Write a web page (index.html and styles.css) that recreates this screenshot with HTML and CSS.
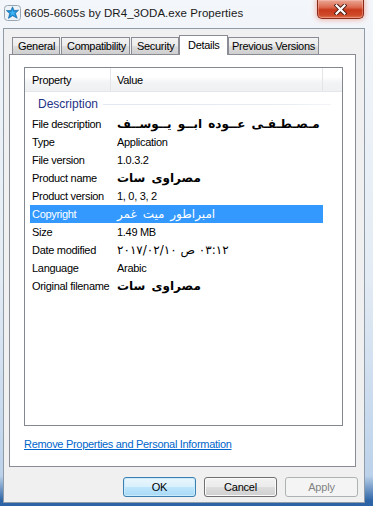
FILE: index.html
```html
<!DOCTYPE html>
<html>
<head>
<meta charset="utf-8">
<link rel="stylesheet" href="styles.css">
</head>
<body>
<div class="window">
  <div class="titlebar">
    <svg class="icon" width="17" height="16" viewBox="0 0 17 16">
      <rect x="0.5" y="0.5" width="16" height="15" rx="3" fill="#eef3f7" stroke="#9aa6b2"/>
      <polygon points="8.5,1.8 10.2,5.6 14.6,5.2 11.4,8.3 13.2,13.2 8.6,10.7 4.4,13.4 5.6,8.6 2.4,5.6 6.9,5.6" fill="#1c8fd6" stroke="#0d5e9e" stroke-width="0.6"/>
      <polygon points="8.5,4.6 9.4,6.9 11.8,6.8 10.1,8.5 10.9,11 8.6,9.6 6.4,11.1 7.1,8.5 5.3,6.9 7.6,6.9" fill="#3fb4f0"/>
    </svg>
    <div class="title">6605-6605s by DR4_3ODA.exe Properties</div>
    <div class="close">
      <svg width="13" height="11" viewBox="0 0 13 11">
        <path d="M2.5 1.5 L10.5 9.5 M10.5 1.5 L2.5 9.5" stroke="#4a1a12" stroke-width="4" stroke-linecap="square"/>
        <path d="M2.5 1.5 L10.5 9.5 M10.5 1.5 L2.5 9.5" stroke="#ffffff" stroke-width="2.2" stroke-linecap="square"/>
      </svg>
    </div>
  </div>
  <div class="client">
    <div class="tabs">
      <div class="tab t-general">General</div>
      <div class="tab t-compat">Compatibility</div>
      <div class="tab t-security">Security</div>
      <div class="tab t-details selected">Details</div>
      <div class="tab t-prev">Previous Versions</div>
    </div>
    <div class="panel">
      <div class="list">
        <div class="header">
          <div class="hcol hcol1">Property</div>
          <div class="hcol hcol2">Value</div>
          <div class="hcol hcol3"></div>
        </div>
        <div class="group"><span class="gtext">Description</span><span class="gline"></span></div>
        <div class="row"><div class="prop">File description</div><div class="val ar">مـصـطـفـى عــوده ابــو يــوســف</div></div>
        <div class="row"><div class="prop">Type</div><div class="val">Application</div></div>
        <div class="row"><div class="prop">File version</div><div class="val">1.0.3.2</div></div>
        <div class="row"><div class="prop">Product name</div><div class="val ar">مصراوى سات</div></div>
        <div class="row"><div class="prop">Product version</div><div class="val">1, 0, 3, 2</div></div>
        <div class="row selrow"><div class="prop">Copyright</div><div class="val ar">امبراطور ميت غمر</div></div>
        <div class="row"><div class="prop">Size</div><div class="val">1.49 MB</div></div>
        <div class="row"><div class="prop">Date modified</div><div class="val ar date"><bdo dir="ltr">٢٠١٧/٠٢/١٠ ص ٠٣:١٢</bdo></div></div>
        <div class="row"><div class="prop">Language</div><div class="val">Arabic</div></div>
        <div class="row"><div class="prop">Original filename</div><div class="val ar">مصراوى سات</div></div>
      </div>
      <a class="link" href="#">Remove Properties and Personal Information</a>
    </div>
    <div class="buttons">
      <div class="btn btn-ok">OK</div>
      <div class="btn btn-cancel">Cancel</div>
      <div class="btn btn-apply">Apply</div>
    </div>
  </div>
</div>
</body>
</html>
```
FILE: styles.css
```css
html, body {
  margin: 0;
  padding: 0;
}
body {
  width: 373px;
  height: 506px;
  overflow: hidden;
  background: linear-gradient(to bottom, #f3f6fa 0%, #e3ebf4 55%, #bcd2ea 94%, #2d64a6 99%);
  font-family: "Liberation Sans", Arial, sans-serif;
  color: #000;
}
.window {
  height: 506px;
  box-sizing: border-box;
  display: flex;
  flex-direction: column;
  padding: 0 8px 3px 3px;
}
.titlebar {
  height: 28px;
  flex: none;
  display: flex;
  align-items: flex-start;
  margin: 0 -8px 0 -3px;
}
.icon {
  flex: none;
  margin: 5px 0 0 4px;
}
.title {
  margin: 6px 0 0 3px;
  font-size: 11.5px;
  line-height: 14px;
  color: #1a1a1a;
  letter-spacing: 0.05px;
}
.close {
  margin-left: auto;
  margin-right: 9px;
  width: 47px;
  height: 19px;
  box-sizing: border-box;
  border: 1px solid #8a2a1b;
  border-top: none;
  border-radius: 0 0 5px 5px;
  background: linear-gradient(to bottom, #eaa896 0%, #dc6a50 40%, #c8391c 55%, #cf4a2a 85%, #e07a58 100%);
  box-shadow: 0 0 5px 1px rgba(236, 120, 100, 0.55), inset 0 0 0 1px rgba(255, 210, 200, 0.35);
  display: flex;
  align-items: center;
  justify-content: center;
}
.client {
  flex: 1;
  border: 1px solid #8f9ba7;
  background: #f0f0f0;
  display: flex;
  flex-direction: column;
  padding: 0 8px 0 5px;
}
.tabs {
  height: 26px;
  flex: none;
  display: flex;
  align-items: flex-end;
  padding-left: 3px;
  margin-bottom: -1px;
  position: relative;
  z-index: 1;
  font-size: 11px;
  letter-spacing: -0.3px;
}
.tab {
  height: 17px;
  box-sizing: border-box;
  margin-bottom: 1px;
  margin-right: 1px;
  border: 1px solid #898c95;
  border-bottom: none;
  background: linear-gradient(to bottom, #f3f3f3 0%, #ebebeb 50%, #dddddd 51%, #cfcfcf 100%);
  line-height: 16px;
  padding: 0 5px;
}
.t-general { width: 48px; }
.t-compat { width: 69px; }
.t-security { width: 48px; margin-right: 0; }
.t-details { width: 49px; }
.t-prev { width: 91px; padding: 0 3px; }
.tab.selected {
  height: 20px;
  margin-bottom: 0;
  background: #fff;
  line-height: 18px;
  padding: 0 8px;
  margin-right: 0;
}
.panel {
  height: 413px;
  flex: none;
  box-sizing: border-box;
  border: 1px solid #898c95;
  background: #fff;
  display: flex;
  flex-direction: column;
  align-items: flex-start;
}
.list {
  margin: 12px 0 0 14px;
  width: 319px;
  height: 359px;
  box-sizing: border-box;
  border: 1px solid #828790;
  font-size: 11px;
  letter-spacing: -0.3px;
}
.header {
  height: 24px;
  display: flex;
  background: linear-gradient(to bottom, #ffffff 0%, #ffffff 40%, #f3f4f6 60%, #eff0f2 100%);
  border-bottom: 1px solid #e3e6ea;
  box-sizing: border-box;
}
.hcol {
  line-height: 24px;
  box-sizing: border-box;
  border-right: 1px solid #e3e5e9;
}
.hcol1 { width: 86px; padding-left: 7px; }
.hcol2 { width: 212px; padding-left: 6px; }
.hcol3 { flex: 1; border-right: none; }
.group {
  height: 23px;
  display: flex;
  align-items: center;
  padding-left: 13px;
  padding-right: 11px;
}
.gtext {
  color: #1e3287;
  font-size: 12px;
  letter-spacing: 0;
  line-height: 16px;
}
.gline {
  flex: 1;
  height: 1px;
  margin-left: 5px;
  margin-top: 1px;
  background: linear-gradient(to right, #e2e8f1, #e8ecf3 80%, #f3f5f8);
}
.row {
  height: 18px;
  width: 293px;
  margin-left: 5px;
  display: flex;
  line-height: 18px;
  white-space: nowrap;
}
.prop {
  width: 85px;
  padding-left: 2px;
  flex: none;
}
.val {
  flex: 1;
}
.ar {
  font-family: "DejaVu Sans", sans-serif;
  font-size: 12px;
  font-weight: bold;
  letter-spacing: 0;
  word-spacing: 2px;
}
.ar.date {
  font-weight: normal;
  letter-spacing: 0.4px;
  word-spacing: 0;
}
.selrow .ar {
  font-weight: normal;
}
.selrow {
  background: #3399ff;
  color: #fff;
}
.link {
  margin: 11px 0 0 14px;
  font-size: 11px;
  line-height: 14px;
  letter-spacing: -0.3px;
  color: #0066cc;
  text-decoration: underline;
}
.buttons {
  display: flex;
  justify-content: flex-end;
  gap: 8px;
  margin: 10px -2px 0 0;
}
.btn {
  width: 73px;
  height: 20px;
  box-sizing: border-box;
  border-radius: 3px;
  font-size: 11px;
  letter-spacing: -0.2px;
  text-align: center;
  line-height: 18px;
}
.btn-ok {
  border: 1px solid #3c7fb1;
  background: linear-gradient(to bottom, #eaf6fd 0%, #d9f0fc 50%, #bee6fd 51%, #a7d9f5 100%);
  box-shadow: inset 0 0 0 1px #c9ebfd;
}
.btn-cancel {
  border: 1px solid #707070;
  background: linear-gradient(to bottom, #f2f2f2 0%, #ebebeb 50%, #dddddd 51%, #cfcfcf 100%);
  box-shadow: inset 0 0 0 1px #fbfbfb;
}
.btn-apply {
  border: 1px solid #adb2b5;
  background: #f4f4f4;
  color: #838383;
}
```
